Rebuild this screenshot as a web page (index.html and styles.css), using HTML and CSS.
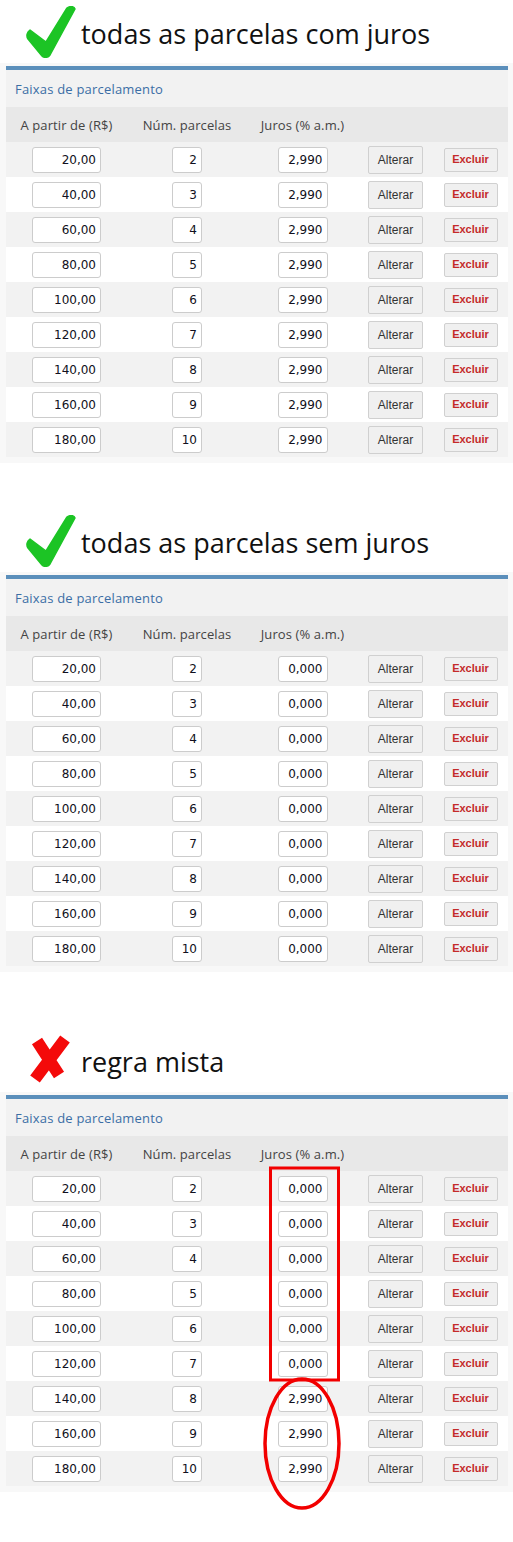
FILE: index.html
```html
<!DOCTYPE html>
<html lang="pt-BR">
<head>
<meta charset="utf-8">
<title>Faixas de parcelamento</title>
<link rel="stylesheet" href="styles.css">
</head>
<body>

<section class="block block--one">
  <h2 class="title">
    <svg class="icon" viewBox="0 0 50 52" width="50" height="52"><path class="check" d="M2,33 C0,30 1,26 4,24 L20,36 L41,2 C44,0 48,0 49,3 L24,49 C22,52 18,52 16,50 Z"/></svg>
    <span>todas as parcelas com juros</span>
  </h2>
  <div class="frame">
    <div class="panel">
      <div class="panel-head">Faixas de parcelamento</div>
      <div class="grid head"><div>A partir de (R$)</div><div>Núm. parcelas</div><div>Juros (% a.m.)</div><div></div><div></div></div>
      <div class="grid row"><div><input class="in in-val" value="20,00" readonly></div><div><input class="in in-num" value="2" readonly></div><div><input class="in in-rate" value="2,990" readonly></div><div><button class="btn btn-alt">Alterar</button></div><div><button class="btn btn-del">Excluir</button></div></div>
      <div class="grid row"><div><input class="in in-val" value="40,00" readonly></div><div><input class="in in-num" value="3" readonly></div><div><input class="in in-rate" value="2,990" readonly></div><div><button class="btn btn-alt">Alterar</button></div><div><button class="btn btn-del">Excluir</button></div></div>
      <div class="grid row"><div><input class="in in-val" value="60,00" readonly></div><div><input class="in in-num" value="4" readonly></div><div><input class="in in-rate" value="2,990" readonly></div><div><button class="btn btn-alt">Alterar</button></div><div><button class="btn btn-del">Excluir</button></div></div>
      <div class="grid row"><div><input class="in in-val" value="80,00" readonly></div><div><input class="in in-num" value="5" readonly></div><div><input class="in in-rate" value="2,990" readonly></div><div><button class="btn btn-alt">Alterar</button></div><div><button class="btn btn-del">Excluir</button></div></div>
      <div class="grid row"><div><input class="in in-val" value="100,00" readonly></div><div><input class="in in-num" value="6" readonly></div><div><input class="in in-rate" value="2,990" readonly></div><div><button class="btn btn-alt">Alterar</button></div><div><button class="btn btn-del">Excluir</button></div></div>
      <div class="grid row"><div><input class="in in-val" value="120,00" readonly></div><div><input class="in in-num" value="7" readonly></div><div><input class="in in-rate" value="2,990" readonly></div><div><button class="btn btn-alt">Alterar</button></div><div><button class="btn btn-del">Excluir</button></div></div>
      <div class="grid row"><div><input class="in in-val" value="140,00" readonly></div><div><input class="in in-num" value="8" readonly></div><div><input class="in in-rate" value="2,990" readonly></div><div><button class="btn btn-alt">Alterar</button></div><div><button class="btn btn-del">Excluir</button></div></div>
      <div class="grid row"><div><input class="in in-val" value="160,00" readonly></div><div><input class="in in-num" value="9" readonly></div><div><input class="in in-rate" value="2,990" readonly></div><div><button class="btn btn-alt">Alterar</button></div><div><button class="btn btn-del">Excluir</button></div></div>
      <div class="grid row"><div><input class="in in-val" value="180,00" readonly></div><div><input class="in in-num" value="10" readonly></div><div><input class="in in-rate" value="2,990" readonly></div><div><button class="btn btn-alt">Alterar</button></div><div><button class="btn btn-del">Excluir</button></div></div>
    </div>
  </div>
</section>

<section class="block block--two">
  <h2 class="title">
    <svg class="icon" viewBox="0 0 50 52" width="50" height="52"><path class="check" d="M2,33 C0,30 1,26 4,24 L20,36 L41,2 C44,0 48,0 49,3 L24,49 C22,52 18,52 16,50 Z"/></svg>
    <span>todas as parcelas sem juros</span>
  </h2>
  <div class="frame">
    <div class="panel">
      <div class="panel-head">Faixas de parcelamento</div>
      <div class="grid head"><div>A partir de (R$)</div><div>Núm. parcelas</div><div>Juros (% a.m.)</div><div></div><div></div></div>
      <div class="grid row"><div><input class="in in-val" value="20,00" readonly></div><div><input class="in in-num" value="2" readonly></div><div><input class="in in-rate" value="0,000" readonly></div><div><button class="btn btn-alt">Alterar</button></div><div><button class="btn btn-del">Excluir</button></div></div>
      <div class="grid row"><div><input class="in in-val" value="40,00" readonly></div><div><input class="in in-num" value="3" readonly></div><div><input class="in in-rate" value="0,000" readonly></div><div><button class="btn btn-alt">Alterar</button></div><div><button class="btn btn-del">Excluir</button></div></div>
      <div class="grid row"><div><input class="in in-val" value="60,00" readonly></div><div><input class="in in-num" value="4" readonly></div><div><input class="in in-rate" value="0,000" readonly></div><div><button class="btn btn-alt">Alterar</button></div><div><button class="btn btn-del">Excluir</button></div></div>
      <div class="grid row"><div><input class="in in-val" value="80,00" readonly></div><div><input class="in in-num" value="5" readonly></div><div><input class="in in-rate" value="0,000" readonly></div><div><button class="btn btn-alt">Alterar</button></div><div><button class="btn btn-del">Excluir</button></div></div>
      <div class="grid row"><div><input class="in in-val" value="100,00" readonly></div><div><input class="in in-num" value="6" readonly></div><div><input class="in in-rate" value="0,000" readonly></div><div><button class="btn btn-alt">Alterar</button></div><div><button class="btn btn-del">Excluir</button></div></div>
      <div class="grid row"><div><input class="in in-val" value="120,00" readonly></div><div><input class="in in-num" value="7" readonly></div><div><input class="in in-rate" value="0,000" readonly></div><div><button class="btn btn-alt">Alterar</button></div><div><button class="btn btn-del">Excluir</button></div></div>
      <div class="grid row"><div><input class="in in-val" value="140,00" readonly></div><div><input class="in in-num" value="8" readonly></div><div><input class="in in-rate" value="0,000" readonly></div><div><button class="btn btn-alt">Alterar</button></div><div><button class="btn btn-del">Excluir</button></div></div>
      <div class="grid row"><div><input class="in in-val" value="160,00" readonly></div><div><input class="in in-num" value="9" readonly></div><div><input class="in in-rate" value="0,000" readonly></div><div><button class="btn btn-alt">Alterar</button></div><div><button class="btn btn-del">Excluir</button></div></div>
      <div class="grid row"><div><input class="in in-val" value="180,00" readonly></div><div><input class="in in-num" value="10" readonly></div><div><input class="in in-rate" value="0,000" readonly></div><div><button class="btn btn-alt">Alterar</button></div><div><button class="btn btn-del">Excluir</button></div></div>
    </div>
  </div>
</section>

<section class="block block--three">
  <h2 class="title">
    <svg class="icon icon--x" viewBox="0 0 44 50" width="44" height="50"><path class="cross" d="M9,7 L31,41 M37,5 L7,45"/></svg>
    <span>regra mista</span>
  </h2>
  <div class="frame">
    <div class="panel">
      <div class="panel-head">Faixas de parcelamento</div>
      <div class="grid head"><div>A partir de (R$)</div><div>Núm. parcelas</div><div>Juros (% a.m.)</div><div></div><div></div></div>
      <div class="grid row"><div><input class="in in-val" value="20,00" readonly></div><div><input class="in in-num" value="2" readonly></div><div><input class="in in-rate" value="0,000" readonly></div><div><button class="btn btn-alt">Alterar</button></div><div><button class="btn btn-del">Excluir</button></div></div>
      <div class="grid row"><div><input class="in in-val" value="40,00" readonly></div><div><input class="in in-num" value="3" readonly></div><div><input class="in in-rate" value="0,000" readonly></div><div><button class="btn btn-alt">Alterar</button></div><div><button class="btn btn-del">Excluir</button></div></div>
      <div class="grid row"><div><input class="in in-val" value="60,00" readonly></div><div><input class="in in-num" value="4" readonly></div><div><input class="in in-rate" value="0,000" readonly></div><div><button class="btn btn-alt">Alterar</button></div><div><button class="btn btn-del">Excluir</button></div></div>
      <div class="grid row"><div><input class="in in-val" value="80,00" readonly></div><div><input class="in in-num" value="5" readonly></div><div><input class="in in-rate" value="0,000" readonly></div><div><button class="btn btn-alt">Alterar</button></div><div><button class="btn btn-del">Excluir</button></div></div>
      <div class="grid row"><div><input class="in in-val" value="100,00" readonly></div><div><input class="in in-num" value="6" readonly></div><div><input class="in in-rate" value="0,000" readonly></div><div><button class="btn btn-alt">Alterar</button></div><div><button class="btn btn-del">Excluir</button></div></div>
      <div class="grid row"><div><input class="in in-val" value="120,00" readonly></div><div><input class="in in-num" value="7" readonly></div><div><input class="in in-rate" value="0,000" readonly></div><div><button class="btn btn-alt">Alterar</button></div><div><button class="btn btn-del">Excluir</button></div></div>
      <div class="grid row"><div><input class="in in-val" value="140,00" readonly></div><div><input class="in in-num" value="8" readonly></div><div><input class="in in-rate" value="2,990" readonly></div><div><button class="btn btn-alt">Alterar</button></div><div><button class="btn btn-del">Excluir</button></div></div>
      <div class="grid row"><div><input class="in in-val" value="160,00" readonly></div><div><input class="in in-num" value="9" readonly></div><div><input class="in in-rate" value="2,990" readonly></div><div><button class="btn btn-alt">Alterar</button></div><div><button class="btn btn-del">Excluir</button></div></div>
      <div class="grid row"><div><input class="in in-val" value="180,00" readonly></div><div><input class="in in-num" value="10" readonly></div><div><input class="in in-rate" value="2,990" readonly></div><div><button class="btn btn-alt">Alterar</button></div><div><button class="btn btn-del">Excluir</button></div></div>
    </div>
  </div>
  <svg class="marks" viewBox="0 0 513 567" width="513" height="567">
    <rect class="mark" x="270.5" y="196" width="68" height="212"/>
    <ellipse class="mark mark--oval" cx="302" cy="471.5" rx="37" ry="64.5"/>
  </svg>
</section>

</body>
</html>
```

FILE: styles.css
```css
html, body {
  margin: 0;
  padding: 0;
  background: #ffffff;
}

body {
  width: 513px;
  font-family: "Open Sans", "Noto Sans", sans-serif;
}

.title {
  display: flex;
  align-items: center;
  gap: 5px;
  margin: 0;
  padding-left: 26px;
  box-sizing: border-box;
  font-family: "Open Sans", "Noto Sans", sans-serif;
  font-weight: 400;
  font-size: 27px;
  line-height: 1;
  color: #111111;
}

.title span { padding-top: 4px; }

.block--one .title { height: 63px; padding-top: 0; }
.block--two .title { height: 109px; padding-top: 46px; }
.block--three .title { height: 120px; padding-top: 54px; }

.block--three {
  position: relative;
  padding-bottom: 47px;
}

.icon { display: block; flex: none; }
.icon--x { margin-left: 2px; margin-right: 4px; }

.check {
  fill: #1cc425;
  stroke: #1cc425;
  stroke-width: 1.5;
  stroke-linejoin: round;
}

.cross {
  fill: none;
  stroke: #f40a0a;
  stroke-width: 12;
  stroke-linecap: butt;
}

.frame {
  background: #f8f8f8;
  padding: 3px 5px 6px 6px;
}

.panel {
  width: 502px;
  background: #ffffff;
  border-top: 4px solid #5b8fbb;
}

.panel-head {
  height: 37px;
  display: flex;
  align-items: center;
  padding-left: 9px;
  background: #f2f2f2;
  color: #3b6ea5;
  font-size: 13px;
  letter-spacing: 0.2px;
}

.grid {
  display: grid;
  grid-template-columns: 121px 120px 111px 75px 75px;
  height: 35px;
  align-items: center;
  justify-items: center;
}

.grid > div {
  display: flex;
  justify-content: center;
  align-items: center;
}

.head {
  background: #e8e8e8;
  color: #444444;
  font-size: 13px;
  letter-spacing: 0.1px;
}

.row:nth-child(odd) { background: #f2f2f2; }
.row:nth-child(even) { background: #ffffff; }

.in {
  box-sizing: border-box;
  height: 26px;
  margin: 0;
  padding: 0 4px 0 2px;
  border: 1px solid #cccccc;
  border-radius: 3px;
  background: #ffffff;
  text-align: right;
  font-family: "DejaVu Sans", Verdana, sans-serif;
  font-size: 12px;
  color: #101020;
  outline: none;
}

.in-val { width: 69px; }
.in-num { width: 30px; }
.in-rate { width: 50px; }

.btn {
  box-sizing: border-box;
  margin: 0;
  padding: 0;
  border: 1px solid #d0d0d0;
  border-radius: 2px;
  background: #f0f0f0;
  font-family: "Liberation Sans", Arial, sans-serif;
  cursor: pointer;
}

.btn-alt {
  width: 55px;
  height: 28px;
  font-size: 12px;
  color: #333333;
  padding-top: 1px;
}

.btn-del {
  width: 54px;
  height: 24px;
  font-size: 11px;
  font-weight: 700;
  color: #c42a2a;
  padding-bottom: 2px;
}

.marks {
  position: absolute;
  left: 0;
  top: 0;
  pointer-events: none;
}

.mark {
  fill: none;
  stroke: #f20000;
  stroke-width: 3;
}

.mark--oval { stroke-width: 3.5; }
```
